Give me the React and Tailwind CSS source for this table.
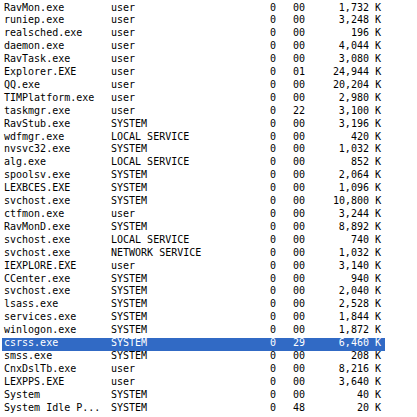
const rows = [
  ["RavMon.exe", "user", "0", "00", "1,732 K"],
  ["runiep.exe", "user", "0", "00", "3,248 K"],
  ["realsched.exe", "user", "0", "00", "196 K"],
  ["daemon.exe", "user", "0", "00", "4,044 K"],
  ["RavTask.exe", "user", "0", "00", "3,080 K"],
  ["Explorer.EXE", "user", "0", "01", "24,944 K"],
  ["QQ.exe", "user", "0", "00", "20,204 K"],
  ["TIMPlatform.exe", "user", "0", "00", "2,980 K"],
  ["taskmgr.exe", "user", "0", "22", "3,100 K"],
  ["RavStub.exe", "SYSTEM", "0", "00", "3,196 K"],
  ["wdfmgr.exe", "LOCAL SERVICE", "0", "00", "420 K"],
  ["nvsvc32.exe", "SYSTEM", "0", "00", "1,032 K"],
  ["alg.exe", "LOCAL SERVICE", "0", "00", "852 K"],
  ["spoolsv.exe", "SYSTEM", "0", "00", "2,064 K"],
  ["LEXBCES.EXE", "SYSTEM", "0", "00", "1,096 K"],
  ["svchost.exe", "SYSTEM", "0", "00", "10,800 K"],
  ["ctfmon.exe", "user", "0", "00", "3,244 K"],
  ["RavMonD.exe", "SYSTEM", "0", "00", "8,892 K"],
  ["svchost.exe", "LOCAL SERVICE", "0", "00", "740 K"],
  ["svchost.exe", "NETWORK SERVICE", "0", "00", "1,032 K"],
  ["IEXPLORE.EXE", "user", "0", "00", "3,140 K"],
  ["CCenter.exe", "SYSTEM", "0", "00", "940 K"],
  ["svchost.exe", "SYSTEM", "0", "00", "2,040 K"],
  ["lsass.exe", "SYSTEM", "0", "00", "2,528 K"],
  ["services.exe", "SYSTEM", "0", "00", "1,844 K"],
  ["winlogon.exe", "SYSTEM", "0", "00", "1,872 K"],
  ["csrss.exe", "SYSTEM", "0", "29", "6,460 K"],
  ["smss.exe", "SYSTEM", "0", "00", "208 K"],
  ["CnxDslTb.exe", "user", "0", "00", "8,216 K"],
  ["LEXPPS.EXE", "user", "0", "00", "3,640 K"],
  ["System", "SYSTEM", "0", "00", "40 K"],
  ["System Idle P...", "SYSTEM", "0", "48", "20 K"],
]

function ProcessRow({ cells, selected }) {
  const [name, user, session, cpu, mem] = cells
  return (
    <div
      className={`ml-[2px] grid h-[12.92px] w-[383px] grid-cols-[107px_159px_23px_40px_48px] items-start pl-[2px] pr-[4px] leading-[10px] whitespace-pre ${
        selected ? "bg-[#316ac5] text-white" : "text-black"
      }`}
    >
      <span>{name}</span>
      <span>{user}</span>
      <span>{session}</span>
      <span>{cpu}</span>
      <span className="text-right">{mem}</span>
    </div>
  )
}

export default function App() {
  return (
    <div className="h-[417px] w-[417px] overflow-hidden bg-white pt-[2.5px] font-['DejaVu_Sans_Mono',monospace] text-[10px]">
      {rows.map((r, i) => (
        <ProcessRow key={i} cells={r} selected={r[0] === "csrss.exe"} />
      ))}
    </div>
  )
}
